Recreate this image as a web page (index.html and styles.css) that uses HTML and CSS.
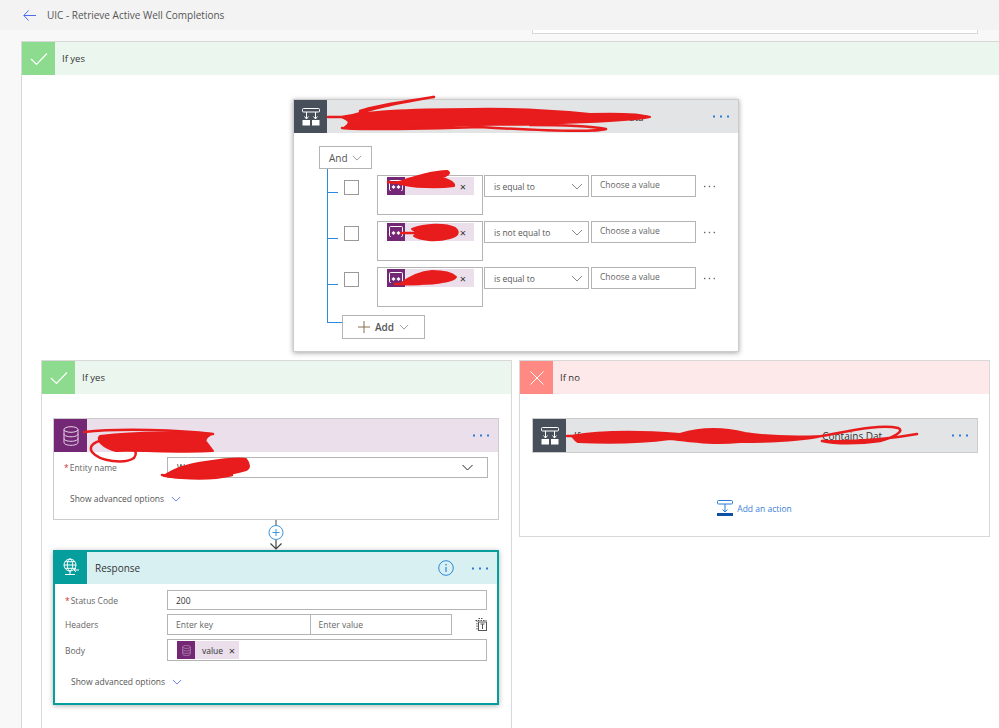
FILE: index.html
```html
<!DOCTYPE html>
<html lang="en">
<head>
  <meta charset="UTF-8" />
  <title>UIC - Retrieve Active Well Completions</title>
  <link rel="stylesheet" href="styles.css">
</head>
<body>
  <svg class="defs" width="0" height="0">
    <symbol id="i-dots" viewBox="0 0 16 3"><rect x="0" y="0.5" width="2" height="2"/><rect x="7" y="0.5" width="2" height="2"/><rect x="14" y="0.5" width="2" height="2"/></symbol>
    <symbol id="i-chev" viewBox="0 0 12 7"><path d="M1 1l5 5 5-5" fill="none" stroke="currentColor" stroke-width="1"/></symbol>
    <symbol id="i-check" viewBox="0 0 18 14"><path d="M1 7l5.5 5.5L17 1.5" fill="none" stroke="#fff" stroke-width="1.2"/></symbol>
    <symbol id="i-cond" viewBox="0 0 18 18"><rect x="0.5" y="0.5" width="17" height="3.5" rx="1" fill="none" stroke="#fff"/><path d="M4.5 4v7M13.5 4v7M2.5 8.5l2 2.5 2-2.5M11.5 8.5l2 2.5 2-2.5" fill="none" stroke="#fff"/><rect x="0.5" y="12" width="7.5" height="5.5" fill="#fff"/><rect x="10" y="12" width="7.5" height="5.5" fill="#fff"/></symbol>
    <symbol id="i-db" viewBox="0 0 16 20"><g fill="none" stroke="currentColor" stroke-width="1"><ellipse cx="8" cy="3.5" rx="7" ry="2.8"/><path d="M1 3.5v13c0 1.6 3.1 2.8 7 2.8s7-1.200 7-2.800v-13M1 8c0 1.600 3.100 2.800 7 2.800s7-1.200 7-2.800M1 12.500c0 1.600 3.100 2.800 7 2.800s7-1.200 7-2.800"/></g></symbol>
    <symbol id="i-tok" viewBox="0 0 14 12"><path d="M2 10.500h-.5a1 1 0 0 1-1-1v-8a1 1 0 0 1 1-1h11a1 1 0 0 1 1 1v8a1 1 0 0 1-1 1H12" fill="none" stroke="#fff"/><path d="M2.500 7l2-2 2 2-2 2zM7.500 7l2-2 2 2-2 2z" fill="#fff"/></symbol>
  </svg>

  <header class="topbar">
    <svg class="back" width="13" height="11" viewBox="0 0 13 11"><path d="M5.500 .5L.8 5.500l4.700 5M1 5.500h12" fill="none" stroke="#4f6bed" stroke-width="1"/></svg>
    <h1>UIC - Retrieve Active Well Completions</h1>
  </header>

  <main class="canvas">
    <div class="stub"></div>

    <section class="branch outer">
      <div class="branch-head yes">
        <span class="branch-icon"><svg width="18" height="14"><use href="#i-check"/></svg></span>
        <span>If yes</span>
      </div>

      <div class="condition card">
        <div class="card-head gray">
          <span class="card-icon slate"><svg width="18" height="18"><use href="#i-cond"/></svg></span>
          <span class="card-title tail-top">ata</span>
          <svg class="dots" width="16" height="3"><use href="#i-dots"/></svg>
        </div>
        <button class="drop and">And <svg width="10" height="6"><use href="#i-chev"/></svg></button>
        <div class="tree">
          <div class="row">
            <span class="tick"></span>
            <span class="check"></span>
            <div class="token-box"><span class="token"><span class="token-icon"><svg width="14" height="12"><use href="#i-tok"/></svg></span><i class="x">×</i></span></div>
            <div class="drop select">is equal to <svg width="12" height="7"><use href="#i-chev"/></svg></div>
            <div class="value">Choose a value</div>
            <svg class="more" width="11" height="3"><use href="#i-dots"/></svg>
          </div>
          <div class="row">
            <span class="tick"></span>
            <span class="check"></span>
            <div class="token-box"><span class="token"><span class="token-icon"><svg width="14" height="12"><use href="#i-tok"/></svg></span><i class="x">×</i></span></div>
            <div class="drop select">is not equal to <svg width="12" height="7"><use href="#i-chev"/></svg></div>
            <div class="value">Choose a value</div>
            <svg class="more" width="11" height="3"><use href="#i-dots"/></svg>
          </div>
          <div class="row">
            <span class="tick"></span>
            <span class="check"></span>
            <div class="token-box"><span class="token"><span class="token-icon"><svg width="14" height="12"><use href="#i-tok"/></svg></span><i class="x">×</i></span></div>
            <div class="drop select">is equal to <svg width="12" height="7"><use href="#i-chev"/></svg></div>
            <div class="value">Choose a value</div>
            <svg class="more" width="11" height="3"><use href="#i-dots"/></svg>
          </div>
          <div class="tree-end"></div>
        </div>
        <button class="drop add">
          <svg width="12" height="12" viewBox="0 0 12 12"><path d="M6 0v12M0 6h12" stroke="#8a6d4f" stroke-width="1"/></svg>
          <b>Add</b>
          <svg width="10" height="6"><use href="#i-chev"/></svg>
        </button>
      </div>

      <div class="branches">
        <section class="branch left">
          <div class="branch-head yes">
            <span class="branch-icon"><svg width="18" height="14"><use href="#i-check"/></svg></span>
            <span>If yes</span>
          </div>

          <div class="card action">
            <div class="card-head lilac">
              <span class="card-icon purple"><svg width="16" height="20"><use href="#i-db"/></svg></span>
              <svg class="dots" width="16" height="3"><use href="#i-dots"/></svg>
            </div>
            <div class="field entity">
              <label><em>*</em>Entity name</label>
              <div class="input wide">Well
                <svg width="13" height="7"><use href="#i-chev"/></svg>
              </div>
            </div>
            <div class="advanced">Show advanced options <svg width="10" height="6"><use href="#i-chev"/></svg></div>
          </div>

          <svg class="connector" width="18" height="30" viewBox="0 0 18 30">
            <path d="M9 0v6" stroke="#444" stroke-width="1"/>
            <circle cx="9" cy="12.500" r="7" fill="#fff" stroke="#3a96dd" stroke-width="1"/>
            <path d="M9 9v7M5.500 12.500h7" stroke="#3a96dd" stroke-width="1"/>
            <path d="M9 20v9M3.500 23.500L9 29l5.500-5.500" fill="none" stroke="#444" stroke-width="1.200"/>
          </svg>

          <div class="card response">
            <div class="card-head teal">
              <span class="card-icon aqua">
                <svg width="18" height="20" viewBox="0 0 18 20"><g fill="none" stroke="#fff" stroke-width="1"><circle cx="8" cy="7" r="6"/><ellipse cx="8" cy="7" rx="2.700" ry="6"/><path d="M2 7h12M3 3.700h10M3 10.300h10M8 13v3M3 16.500h10"/><path d="M12 12h5M14 10l-2 2 2 2"/></g></svg>
              </span>
              <span class="card-title">Response</span>
              <svg class="info" width="16" height="16" viewBox="0 0 16 16"><circle cx="8" cy="8" r="7.300" fill="none" stroke="#2b88d8" stroke-width="1"/><path d="M8 7v5" stroke="#2b88d8" stroke-width="1.200"/><rect x="7.300" y="4" width="1.400" height="1.400" fill="#2b88d8"/></svg>
              <svg class="dots" width="16" height="3"><use href="#i-dots"/></svg>
            </div>
            <div class="field status">
              <label><em>*</em>Status Code</label>
              <div class="input full">200</div>
            </div>
            <div class="field headers">
              <label>Headers</label>
              <div class="input pair">
                <span class="hint">Enter key</span>
                <span class="hint">Enter value</span>
              </div>
              <svg class="trash" width="12" height="13" viewBox="0 0 12 13"><g fill="none" stroke="#555" stroke-width="1"><path d="M.5 2.500h11M2 2.500v9M3.500 .5h5" stroke-dasharray="1.500 1"/><rect x="3.500" y="4" width="8" height="8.500" fill="#fff"/><path d="M5.500 6h4M7.500 6v5"/></g></svg>
            </div>
            <div class="field body-field">
              <label>Body</label>
              <div class="input full">
                <span class="token small"><span class="token-icon"><svg width="9" height="11" class="db-tok"><use href="#i-db"/></svg></span>value<i class="x">×</i></span>
              </div>
            </div>
            <div class="advanced">Show advanced options <svg width="10" height="6"><use href="#i-chev"/></svg></div>
          </div>
        </section>

        <section class="branch right">
          <div class="branch-head no">
            <span class="branch-icon"><svg width="14" height="14" viewBox="0 0 14 14"><path d="M.5 .5l13 13M13.500 .5l-13 13" stroke="#fff" stroke-width="1"/></svg></span>
            <span>If no</span>
          </div>
          <div class="card nested">
            <div class="card-head gray">
              <span class="card-icon slate"><svg width="18" height="18"><use href="#i-cond"/></svg></span>
              <span class="card-title">If</span>
              <span class="card-title tail-no">Contains Dat</span>
              <svg class="dots" width="16" height="3"><use href="#i-dots"/></svg>
            </div>
          </div>
          <a class="add-action">
            <svg width="16" height="16" viewBox="0 0 16 16"><rect x=".5" y=".5" width="15" height="3.500" rx="1" fill="none" stroke="#2b7cd3"/><path d="M8 4v8M5.500 9.500L8 12l2.500-2.500" fill="none" stroke="#2b7cd3"/><rect y="13" width="16" height="3" fill="#0f4fa8"/></svg>
            Add an action
          </a>
        </section>
      </div>
    </section>
  </main>

  <!-- red marker scribbles drawn over the screenshot -->
  <svg class="scribbles" width="999" height="728" viewBox="0 0 999 728">
    <g fill="#e81c1c" stroke="#e81c1c" stroke-width="2" stroke-linecap="round" stroke-linejoin="round">
      <path d="M342 117C370 110 420 109 470 109C520 108 560 111 590 114C620 113 640 114 650 117C630 121 590 122 560 123C530 126 500 124 470 125C420 128 370 129 345 127C352 122 348 120 342 117Z"/>
      <path d="M397 183C412 177 435 171 447 171C452 173 447 176 440 178C450 179 455 184 454 186C440 188 412 188 397 183Z"/>
      <path d="M412 229C425 224 445 223 455 228C460 232 458 236 450 238C435 242 420 240 414 236C418 233 416 231 412 229Z"/>
      <path d="M400 284C408 278 418 272 432 271C445 271 452 273 456 277C454 282 430 285 400 284Z"/>
      <path d="M100 436C140 431 190 432 212 434C205 438 204 441 207 443C210 447 212 450 213 451C180 453 140 450 116 451C102 447 96 440 100 436Z"/>
      <path d="M164 476C175 468 190 464 205 462C225 459 240 458 246 459C250 464 250 468 246 470C230 475 190 481 164 476Z"/>
      <path d="M572 436C600 431 640 431 680 434C700 428 720 427 745 433C770 437 800 437 822 436C800 441 770 442 740 442C710 445 690 441 670 439C640 443 600 443 578 442C574 440 574 438 572 436Z"/>
    </g>
    <g fill="none" stroke="#e81c1c" stroke-width="2.500" stroke-linecap="round" stroke-linejoin="round">
      <path d="M328 117H350C370 108 400 103 434 97C415 100 375 105 360 111"/>
      <path d="M342 128C360 130 430 129 480 127C530 130 590 133 606 129C590 126 550 125 530 125"/>
      <path d="M388 182C392 183 396 183 400 182"/>
      <path d="M401 233H420"/>
      <path d="M395 284H420"/>
      <path d="M84 432C120 428 180 430 213 434M108 440C95 440 88 446 92 452C100 462 125 464 134 458C140 450 130 446 120 448"/>
      <path d="M162 475C190 480 215 479 232 475"/>
      <path d="M567 436H585M822 436C850 431 880 424 898 428C906 431 892 438 880 441C860 444 835 444 822 441C860 442 895 438 917 434"/>
    </g>
  </svg>
</body>
</html>
```

FILE: styles.css
```css
* {
  box-sizing: border-box;
}

html, body {
  height: 728px;
  overflow: hidden;
}

body {
  margin: 0;
  position: relative;
  background-color: #f8f8f8;
  font-family: "Open Sans", sans-serif;
  font-size: 8.5px;
  color: #444;
}

.defs {
  position: absolute;
}

.dots {
  fill: #2b7cd3;
}

.more {
  fill: #666;
}

.topbar {
  display: flex;
  align-items: center;
  height: 30px;
  padding-left: 23px;
  background-color: #f3f3f3;
}

.topbar h1 {
  margin: 0 0 0 11px;
  font-size: 10px;
  font-weight: 400;
  color: #555;
}

.canvas {
  padding-left: 21px;
}

.stub {
  width: 446px;
  height: 4px;
  margin-left: 511px;
  background-color: #fff;
  border: 1px solid #d8d8d8;
  border-top: none;
}

.branch {
  background-color: #fff;
  border: 1px solid #d8d8d8;
}

.outer {
  width: 1000px;
  height: 700px;
  margin-top: 7px;
}

.branch-head {
  display: flex;
  align-items: center;
  height: 33px;
  font-size: 9.5px;
  color: #333;
}

.branch-head.yes {
  background-color: #ebf7ee;
}

.branch-head.no {
  background-color: #fde9e9;
}

.branch-icon {
  display: flex;
  align-items: center;
  justify-content: center;
  width: 33px;
  height: 33px;
  margin-right: 7px;
}

.yes .branch-icon {
  background-color: #8cdb8e;
}

.no .branch-icon {
  background-color: #ff8a84;
}

.card {
  background-color: #fff;
  border: 1px solid #ccc;
}

.card-head {
  display: flex;
  align-items: center;
  height: 33px;
  padding-right: 9px;
}

.card-head .dots {
  margin-left: auto;
}

.card-head.gray {
  background-color: #e3e4e6;
}

.card-head.lilac {
  background-color: #eadfeb;
}

.card-head.teal {
  background-color: #d8f0f2;
}

.card-icon {
  display: flex;
  align-items: center;
  justify-content: center;
  width: 33px;
  height: 33px;
  color: #e6d6e6;
}

.card-icon.slate {
  background-color: #474f5a;
}

.card-icon.purple {
  background-color: #742774;
}

.card-icon.aqua {
  background-color: #069d9d;
}

.card-title {
  margin-left: 8px;
  font-size: 10px;
  color: #333;
}

.tail-top {
  margin-left: 302px;
}

.tail-no {
  margin-left: 242px;
}

.condition {
  width: 446px;
  height: 253px;
  margin: 24px 0 0 271px;
  box-shadow: 0 1px 5px rgba(0, 0, 0, 0.35);
}

.drop {
  display: flex;
  align-items: center;
  font-family: inherit;
  background-color: #fff;
  border: 1px solid #b4b4b4;
  color: #555;
}

.drop svg {
  color: #888;
}

.and {
  justify-content: space-between;
  width: 53px;
  height: 23px;
  margin: 13px 0 0 25px;
  padding: 0 9px;
  font-size: 10px;
}

.tree {
  width: 400px;
  margin-left: 33px;
  padding-top: 6px;
  border-left: 1px solid #2b8be0;
}

.row {
  display: flex;
  align-items: flex-start;
  height: 46px;
}

.tick {
  width: 10px;
  height: 1px;
  margin-top: 17px;
  background-color: #2b8be0;
}

.check {
  width: 15px;
  height: 15px;
  margin: 5px 0 0 6px;
  background-color: #fff;
  border: 1px solid #999;
}

.token-box {
  width: 106px;
  height: 40px;
  margin-left: 18px;
  padding: 1px 0 0 9px;
  border: 1px solid #b4b4b4;
}

.token {
  display: flex;
  align-items: center;
  width: 87px;
  height: 18px;
  background-color: #eadfeb;
}

.token-icon {
  display: flex;
  align-items: center;
  justify-content: center;
  width: 18px;
  height: 18px;
  background-color: #742774;
  color: #c9a9c9;
}

.x {
  margin-left: auto;
  margin-right: 8px;
  font-style: normal;
  font-size: 11px;
  line-height: 1;
  color: #333;
}

.select {
  justify-content: space-between;
  width: 105px;
  height: 22px;
  margin-left: 1px;
  padding: 0 5px 0 9px;
  font-size: 8.5px;
}

.value {
  width: 105px;
  height: 22px;
  margin-left: 2px;
  padding: 3px 0 0 8px;
  border: 1px solid #b4b4b4;
  color: #666;
}

.more {
  margin: 10px 0 0 8px;
}

.tree-end {
  width: 15px;
  height: 10px;
  border-bottom: 1px solid #2b8be0;
}

.add {
  justify-content: center;
  gap: 5px;
  width: 83px;
  height: 24px;
  margin: -8px 0 0 48px;
  padding: 0;
  font-size: 10px;
}

.add b {
  font-weight: 600;
}

.branches {
  display: flex;
  align-items: flex-start;
  gap: 7px;
  margin: 8px 0 0 19px;
}

.left {
  width: 471px;
  height: 400px;
}

.right {
  width: 471px;
  height: 177px;
}

.action {
  width: 446px;
  height: 102px;
  margin: 24px 0 0 11px;
}

.field {
  display: flex;
  align-items: center;
}

.field label {
  width: 102px;
  margin-left: 10px;
  color: #666;
}

.field em {
  margin-right: 1px;
  font-style: normal;
  color: #d13438;
}

.input {
  display: flex;
  align-items: center;
  height: 21px;
  padding-left: 8px;
  border: 1px solid #b4b4b4;
  color: #333;
}

.entity {
  margin-top: 5px;
}

.wide {
  justify-content: space-between;
  width: 321px;
  margin-left: 1px;
  padding: 0 13px 0 9px;
}

.wide svg {
  color: #222;
}

.advanced {
  display: flex;
  align-items: center;
  gap: 7px;
  margin: 15px 0 0 16px;
  color: #555;
}

.advanced svg {
  color: #4f6bed;
}

.connector {
  display: block;
  margin: 0 0 0 225px;
}

.response {
  width: 446px;
  height: 155px;
  margin-left: 11px;
  border: 2px solid #069d9d;
  box-shadow: 0 1px 5px rgba(0, 0, 0, 0.3);
}

.response .card-head {
  height: 32px;
  padding-right: 9px;
}

.response .card-icon {
  height: 32px;
  width: 32px;
}

.info {
  margin-left: auto;
}

.response .card-head .dots {
  margin-left: 18px;
}

.status {
  margin-top: 6px;
}

.full {
  width: 320px;
}

.status .full {
  height: 20px;
}

.headers {
  margin-top: 4px;
}

.pair {
  width: 285px;
  padding: 0;
  color: #666;
}

.hint {
  width: 50%;
  height: 100%;
  padding: 4px 0 0 8px;
}

.hint + .hint {
  border-left: 1px solid #b4b4b4;
}

.trash {
  margin-left: 23px;
}

.body-field {
  margin-top: 4px;
}

.body-field .full {
  height: 22px;
  padding-left: 9px;
}

.token.small {
  width: 62px;
}

.small .token-icon {
  margin-right: 7px;
}

.small .x {
  margin-right: 4px;
}

.response .advanced {
  margin-top: 15px;
}

.nested {
  width: 446px;
  height: 35px;
  margin: 24px 0 0 12px;
}

.add-action {
  display: flex;
  align-items: center;
  justify-content: center;
  gap: 4px;
  margin-top: 47px;
  color: #3c82d8;
}

.scribbles {
  position: absolute;
  top: 0;
  left: 0;
  pointer-events: none;
}
```
